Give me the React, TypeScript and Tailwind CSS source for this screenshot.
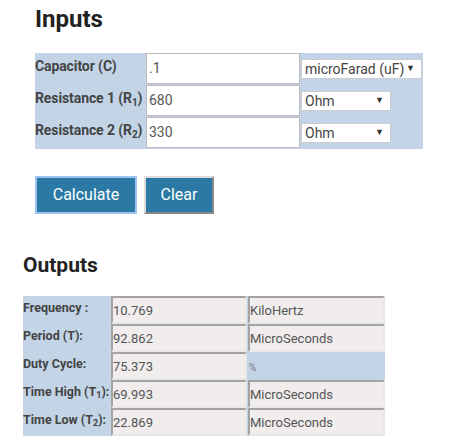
import React from 'react';

const inputs = [
  { label: 'Capacitor (C)', sub: '', value: '.1', unit: 'microFarad (uF)', wide: true },
  { label: 'Resistance 1 (R', sub: '1', value: '680', unit: 'Ohm', wide: false },
  { label: 'Resistance 2 (R', sub: '2', value: '330', unit: 'Ohm', wide: false },
];

const outputs = [
  { label: 'Frequency :', sub: '', tail: '', value: '10.769', unit: 'KiloHertz' },
  { label: 'Period (T):', sub: '', tail: '', value: '92.862', unit: 'MicroSeconds' },
  { label: 'Duty Cycle:', sub: '', tail: '', value: '75.373', unit: '%' },
  { label: 'Time High (T', sub: '1', tail: '):', value: '69.993', unit: 'MicroSeconds' },
  { label: 'Time Low (T', sub: '2', tail: '):', value: '22.869', unit: 'MicroSeconds' },
];

const Caret = () => <span className="text-[9px] text-[#333]">▼</span>;

export default function App() {
  return (
    <div className="w-[465px] h-[441px] bg-white overflow-hidden font-['Roboto',sans-serif]">
      <h2 className="ml-[35px] mt-[7px] text-[24px] leading-[24px] font-bold text-[#222]">Inputs</h2>

      <div className="ml-[35px] mt-[22px] w-[388px] bg-[#c3d4e7] flex flex-col gap-px pb-px">
        {inputs.map((r, i) => (
          <div key={i} className="flex items-start h-[31px]">
            <div className="w-[111px] pt-[5px] text-[14px] leading-[17px] font-bold text-[#444] whitespace-nowrap tracking-[-0.1px]">
              {r.label}
              {r.sub && <sub className="text-[10px]">{r.sub}</sub>}
              {r.sub && ')'}
            </div>
            <div className="w-[154px] h-[31px] bg-white border border-[#bbb] flex items-center pl-[2px] text-[14px] text-[#555]">
              {r.value}
            </div>
            <div
              className={`ml-px mt-[6px] h-[20px] bg-white border border-[#ccc] flex items-center justify-between pl-[3px] pr-[6px] text-[14px] text-[#444] ${
                r.wide ? 'w-[121px]' : 'w-[90px]'
              }`}
            >
              <span>{r.unit}</span>
              <Caret />
            </div>
          </div>
        ))}
      </div>

      <div className="ml-[35px] mt-[27px] flex gap-[7px]">
        <button className="w-[102px] h-[38px] bg-[#2a7aa5] text-white text-[16px] border-2 border-[#9cc3ef]">
          Calculate
        </button>
        <button className="w-[70px] h-[38px] bg-[#2a7aa5] text-white text-[16px] border-2 border-t-[#ddd] border-l-[#ddd] border-b-[#888] border-r-[#888]">
          Clear
        </button>
      </div>

      <h3 className="ml-[23px] mt-[41px] text-[21px] leading-[21px] font-bold text-[#222]">Outputs</h3>

      <div className="ml-[23px] mt-[20px] w-[362px] bg-[#c3d4e7] flex flex-col">
        {outputs.map((r, i) => (
          <div key={i} className="flex h-[28px]">
            <div className="w-[88px] pt-[4px] text-[12.5px] leading-[16px] font-bold text-[#444] whitespace-nowrap">
              {r.label}
              {r.sub && <sub className="text-[9px]">{r.sub}</sub>}
              {r.tail}
            </div>
            <div className="w-[136px] h-[28px] bg-[#f0edec] border-2 border-t-[#a3a3a3] border-l-[#a3a3a3] border-b-[#e8e8e8] border-r-[#e8e8e8] flex items-center pt-[2px] text-[13px] text-[#555]">
              {r.value}
            </div>
            {r.unit === '%' ? (
              <div className="ml-px w-[137px] h-[28px] flex items-center pt-[2px] pl-px text-[10px] text-[#777]">%</div>
            ) : (
              <div className="ml-px w-[137px] h-[28px] bg-[#f0edec] border-2 border-t-[#a3a3a3] border-l-[#a3a3a3] border-b-[#e8e8e8] border-r-[#e8e8e8] flex items-center pt-[2px] text-[13px] text-[#555]">
                {r.unit}
              </div>
            )}
          </div>
        ))}
      </div>
    </div>
  );
}
